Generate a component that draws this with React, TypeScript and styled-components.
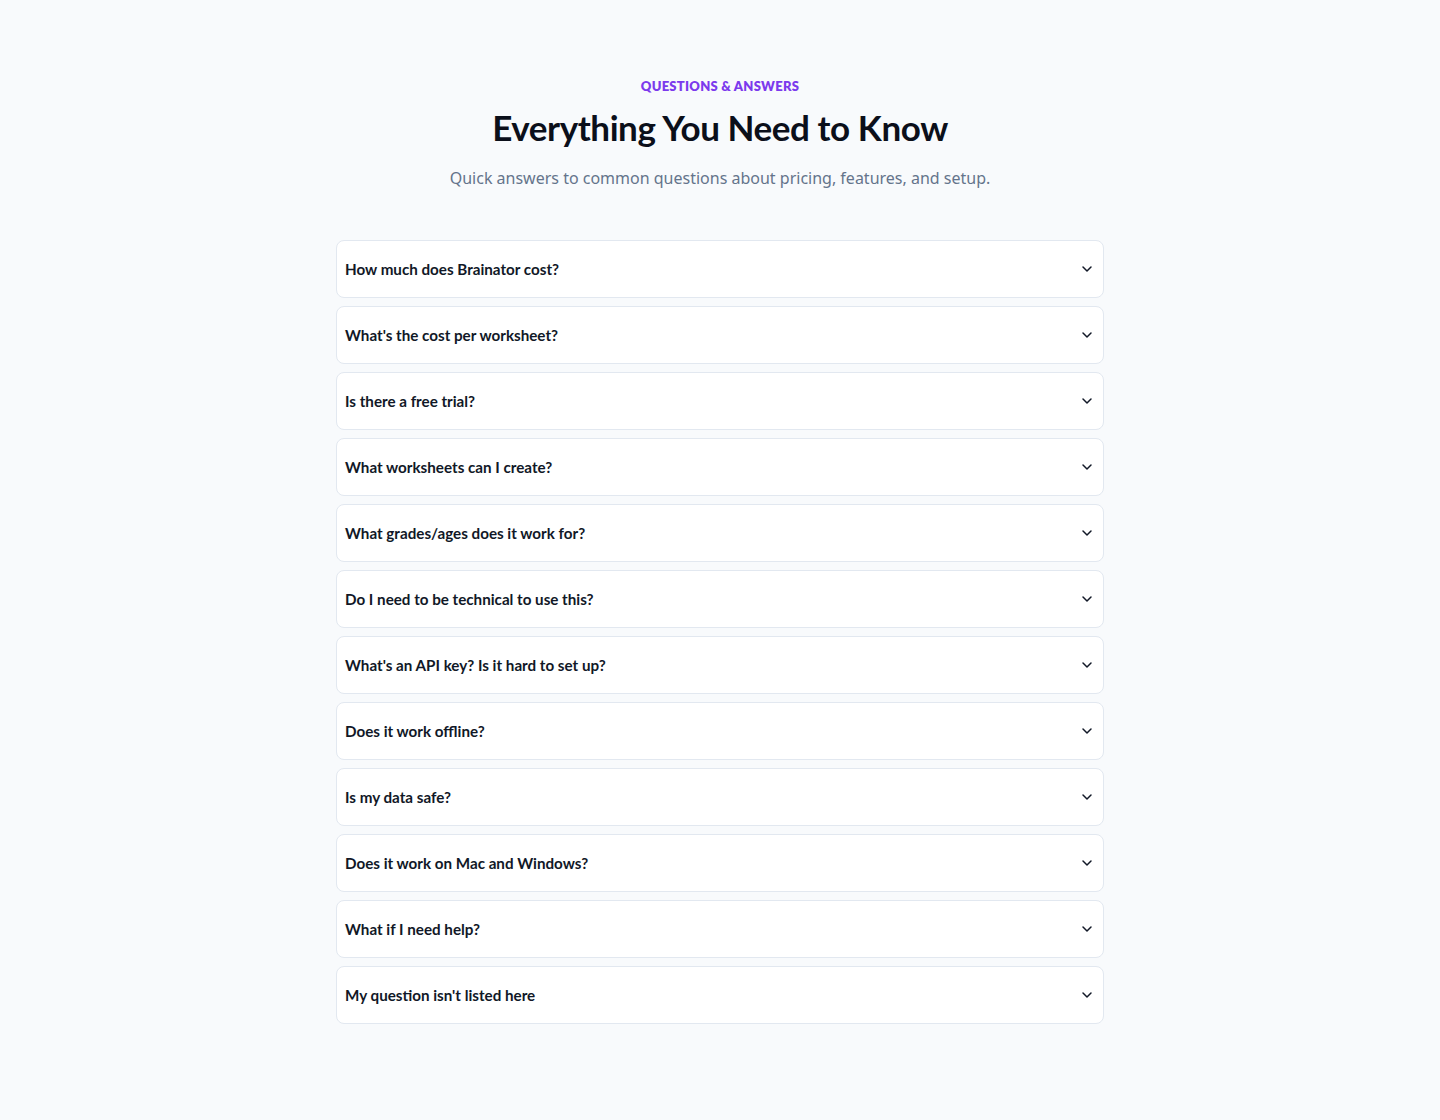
import React from "react";
import styled, { createGlobalStyle } from "styled-components";
import { ChevronDown } from "lucide-react";

const QUESTIONS = [
  "How much does Brainator cost?",
  "What's the cost per worksheet?",
  "Is there a free trial?",
  "What worksheets can I create?",
  "What grades/ages does it work for?",
  "Do I need to be technical to use this?",
  "What's an API key? Is it hard to set up?",
  "Does it work offline?",
  "Is my data safe?",
  "Does it work on Mac and Windows?",
  "What if I need help?",
  "My question isn't listed here",
];

const GlobalStyle = createGlobalStyle`
  html, body {
    margin: 0;
    padding: 0;
    background: #f8fafc;
  }
  body {
    font-family: Lato, "Noto Sans", sans-serif;
    color: #0f172a;
    -webkit-font-smoothing: antialiased;
  }
`;

const Section = styled.section`
  min-height: 1120px;
  box-sizing: border-box;
  padding: 77px 0 80px;
  display: flex;
  flex-direction: column;
  align-items: center;
`;

const Header = styled.header`
  display: flex;
  flex-direction: column;
  align-items: center;
  text-align: center;
  margin-bottom: 50px;
`;

const Eyebrow = styled.span`
  font-family: Lato, sans-serif;
  font-size: 13px;
  font-weight: 800;
  letter-spacing: 0.02em;
  text-transform: uppercase;
  color: #7c3aed;
  line-height: 18px;
`;

const Title = styled.h2`
  margin: 8px 0 0;
  font-family: Lato, sans-serif;
  font-size: 35px;
  font-weight: 700;
  line-height: 48px;
  color: #0b0f1a;
  letter-spacing: -0.012em;
`;

const Subtitle = styled.p`
  margin: 15px 0 0;
  font-family: "Noto Sans", sans-serif;
  font-size: 16px;
  line-height: 24px;
  color: #64748b;
`;

const List = styled.div`
  width: 768px;
  display: flex;
  flex-direction: column;
  gap: 8px;
`;

const Item = styled.div`
  box-sizing: border-box;
  height: 58px;
  background: #ffffff;
  border: 1px solid #e2e8f0;
  border-radius: 8px;
  display: flex;
  align-items: center;
  justify-content: space-between;
  padding: 0 8px;
  cursor: pointer;
`;

const Question = styled.span`
  font-family: Lato, sans-serif;
  font-size: 15.2px;
  font-weight: 700;
  color: #111827;
`;

const Chevron = styled(ChevronDown)`
  color: #111827;
  flex-shrink: 0;
`;

export default function App() {
  return (
    <>
      <GlobalStyle />
      <Section>
        <Header>
          <Eyebrow>Questions &amp; Answers</Eyebrow>
          <Title>Everything You Need to Know</Title>
          <Subtitle>Quick answers to common questions about pricing, features, and setup.</Subtitle>
        </Header>
        <List>
          {QUESTIONS.map((q) => (
            <Item key={q}>
              <Question>{q}</Question>
              <Chevron size={16} strokeWidth={2.25} />
            </Item>
          ))}
        </List>
      </Section>
    </>
  );
}
